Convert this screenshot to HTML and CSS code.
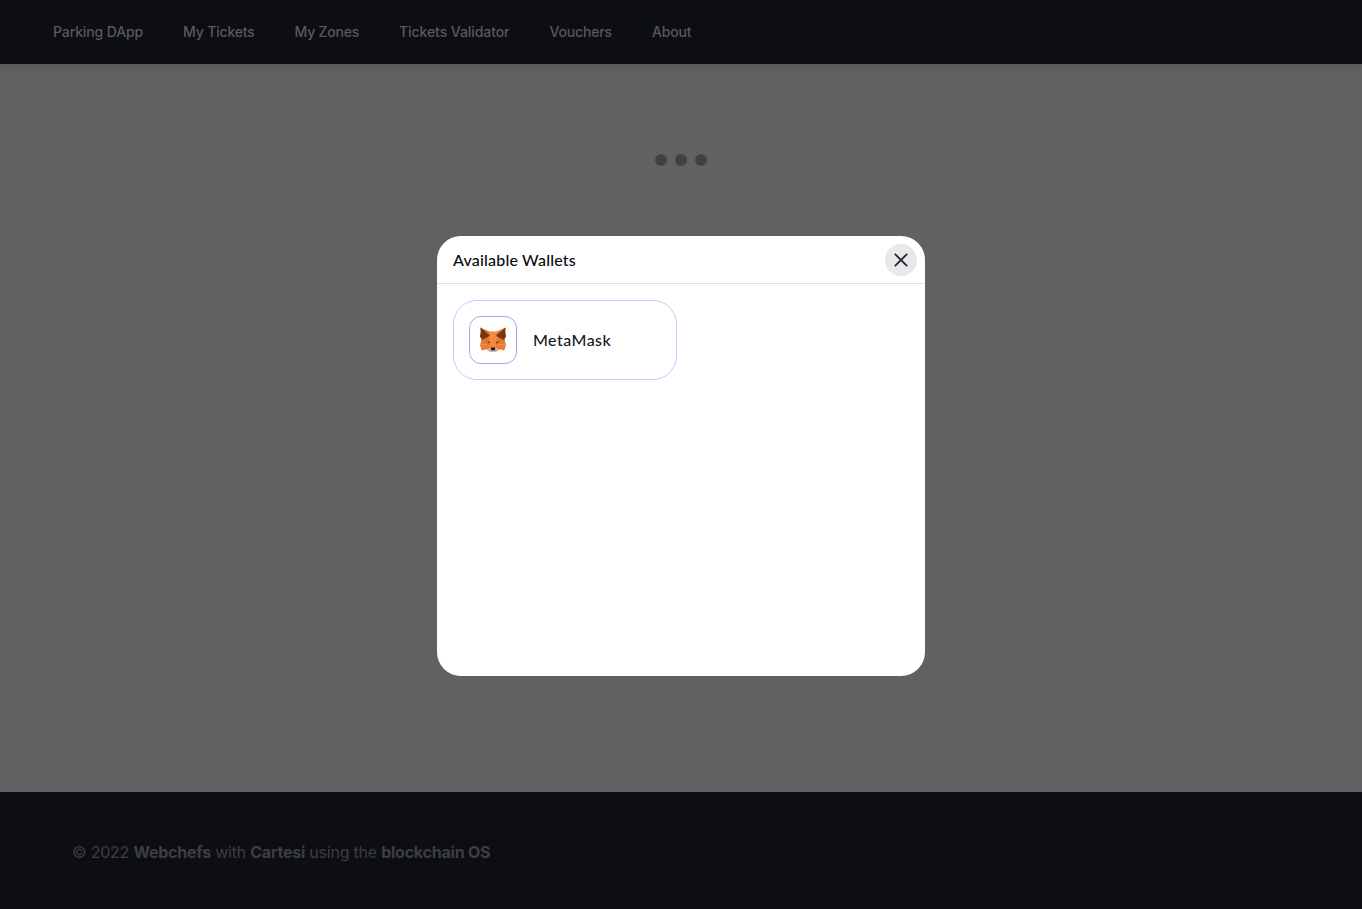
FILE: index.html
```html
<!DOCTYPE html>
<html lang="en">
<head>
<meta charset="utf-8">
<title>Parking DApp</title>
<link rel="stylesheet" href="styles.css">
</head>
<body>
<div class="page">
  <nav class="navbar">
    <a class="nav-link parking">Parking DApp</a>
    <a class="nav-link tickets">My Tickets</a>
    <a class="nav-link zones">My Zones</a>
    <a class="nav-link validator">Tickets Validator</a>
    <a class="nav-link vouchers">Vouchers</a>
    <a class="nav-link about">About</a>
  </nav>
  <main class="content">
    <div class="loader"><span class="dot"></span><span class="dot"></span><span class="dot"></span></div>
  </main>
  <footer class="footer">
    <p class="footer-text">© 2022 <b>Webchefs</b> with <b>Cartesi</b> using the <b>blockchain OS</b></p>
  </footer>
</div>
<div class="overlay">
  <section class="modal">
    <header class="modal-header">
      <h2 class="modal-title">Available Wallets</h2>
      <button class="close" aria-label="Close">
        <svg width="14" height="14" viewBox="0 0 14 14"><path d="M.8.8l12.400 12.400M13.200.8L.8 13.200" stroke="#242835" stroke-width="1.800" fill="none"/></svg>
      </button>
    </header>
    <div class="modal-body">
      <button class="wallet">
        <span class="wallet-icon">
          <svg class="fox" width="28" height="26" viewBox="0 0 28 26">
            <path fill="#ee7c2e" d="M1.500.5l9 4h7l9-4-1 10.500.5 3.500 1 3.500-1.700 5.500-4.800-1.200-3.200 2.400h-6.600l-3.200-2.400-4.800 1.200L1 18l1-3.500L2.500 11z"/>
            <path fill="#f58b3f" d="M11.300 5h5.400L18 19l-4 1-4-1z"/>
            <path fill="#df6f22" d="M10.500 10.500l-3 1L10.500 14l.6 4.500L9 17l-6-3 4.500-2.500zM17.500 10.500l3 1-3 2.500-.6 4.500L19 17l6-3-4.500-2.500z" opacity=".55"/>
            <path fill="#703a16" d="M1.500.5L10.800 8.200 8.500 10.200 3.200 13 .9 9.500 1.700 5zM26.500.5L17.200 8.200l2.300 2 5.300 2.800 2.300-3.500L26.300 5z"/>
            <path fill="#e8a77c" d="M1.300 17.700l7-.4v.6l-7 .3zM26.700 17.700l-7-.4v.6l7 .3z"/>
            <path fill="#4d4c56" d="M8.300 14.300l2.600.6.2 1.500-2.200-.7zM19.700 14.300l-2.600.6-.2 1.500 2.200-.7z"/>
            <path fill="#c9bcb2" d="M8.200 22.200l3-1.400h5.600l3 1.400-3.100 2.900h-5.400z"/>
            <path fill="#161616" d="M12.200 20.500h3.600l.5 2.700h-4.600z"/>
          </svg>
        </span>
        <span class="wallet-name">MetaMask</span>
      </button>
    </div>
  </section>
</div>
</body>
</html>
```
FILE: styles.css
```css
* { box-sizing: border-box; }
body { margin: 0; font-family: Inter, "Liberation Sans", sans-serif; }
.page { height: 909px; display: flex; flex-direction: column; background: #606163; overflow: hidden; }
.navbar { height: 64px; flex: none; display: flex; align-items: center; gap: 40px; padding-left: 53px; background: #0d0e13; box-shadow: 0 2px 8px rgba(0, 0, 0, .12); }
.nav-link { font-size: 14px; font-weight: 500; line-height: 20px; color: #58595b; white-space: nowrap; }
.parking { letter-spacing: -.12px; }
.vouchers, .about { letter-spacing: -.15px; }
.tickets { letter-spacing: -.18px; }
.zones { letter-spacing: -.24px; }
.validator { letter-spacing: -.07px; }
.content { flex: 1; display: flex; justify-content: center; align-items: flex-start; padding-top: 90px; }
.loader { display: flex; gap: 8px; }
.dot { width: 12px; height: 12px; border-radius: 50%; background: #414246; }
.footer { height: 117px; flex: none; padding: 48px 72px 0; background: #0d0e13; }
.footer-text { margin: 0; font-size: 16px; line-height: 24px; letter-spacing: -.23px; color: #3c3e42; font-weight: 400; }
.footer-text b { font-weight: 700; }
.overlay { position: absolute; inset: 0; display: flex; justify-content: center; align-items: flex-start; padding-top: 236px; }
.modal { width: 488px; height: 440px; border-radius: 24px; background: #fff; overflow: hidden; }
.modal-header { height: 48px; display: flex; align-items: center; justify-content: space-between; padding: 0 8px 0 16px; border-bottom: 1px solid #dfe0e4; }
.modal-title { margin: 0; font: 500 16px/20px Lato, sans-serif; letter-spacing: .19px; color: #0a0b0f; }
.close { width: 32px; height: 32px; padding: 0; border: 0; border-radius: 50%; background: #e8e8ea; display: flex; align-items: center; justify-content: center; margin-top: 1px; }
.modal-body { padding: 16px; }
.wallet { width: 224px; height: 80px; display: flex; align-items: center; gap: 16px; padding: 0 15px; border: 1px solid #c8caf6; border-radius: 24px; background: #fff; }
.wallet-icon { width: 48px; height: 48px; display: flex; align-items: center; justify-content: center; border: 1px solid #a3a9ed; border-radius: 12px; }
.fox { margin-bottom: 1px; }
.wallet-name { font: 500 16px/20px Lato, sans-serif; letter-spacing: .45px; color: #16181e; }
```
